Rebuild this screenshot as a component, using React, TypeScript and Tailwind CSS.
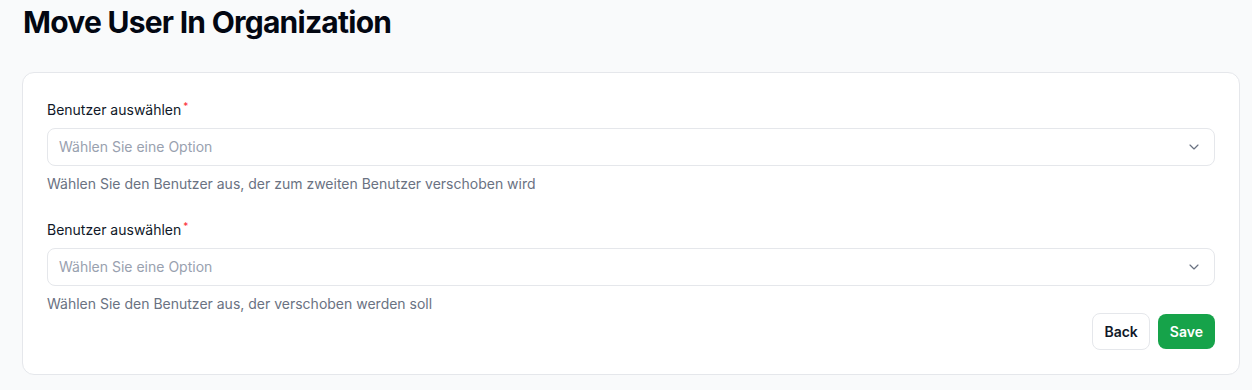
import { ChevronDown } from 'lucide-react';

type FieldProps = {
  label: string;
  placeholder: string;
  hint: string;
};

const SelectField = ({ label, placeholder, hint }: FieldProps) => {
  return (
    <div className="flex flex-col">
      <label className="text-sm leading-5 text-gray-900">
        {label}
        <sup className="ml-0.5 text-[10px] text-red-500">*</sup>
      </label>

      <button
        type="button"
        className="mt-2 flex h-[38px] w-full items-center justify-between rounded-lg border border-gray-200 bg-white pl-[11px] pr-3 text-left"
      >
        <span className="text-sm text-gray-400">{placeholder}</span>
        <ChevronDown className="h-4 w-4 text-gray-500" strokeWidth={1.75} />
      </button>

      <p className="mt-2 text-sm leading-5 text-gray-500">{hint}</p>
    </div>
  );
};

export default function App() {
  return (
    <div className="min-h-[390px] bg-gray-50 pl-[22px] pr-[12px] pt-1 font-['Inter',sans-serif]">
      <h1 className="pl-px text-3xl leading-9 font-bold tracking-tight text-gray-950">
        Move User In Organization
      </h1>

      <div className="mt-8 rounded-xl border border-gray-200 bg-white px-6 pt-[27px] pb-6">
        <div className="flex flex-col gap-[26px]">
          <SelectField
            label="Benutzer auswählen"
            placeholder="Wählen Sie eine Option"
            hint="Wählen Sie den Benutzer aus, der zum zweiten Benutzer verschoben wird"
          />
          <SelectField
            label="Benutzer auswählen"
            placeholder="Wählen Sie eine Option"
            hint="Wählen Sie den Benutzer aus, der verschoben werden soll"
          />
        </div>

        <div className="-mt-px flex items-center justify-end gap-2">
          <button
            type="button"
            className="h-[37px] rounded-lg border border-gray-200 bg-white px-[11px] text-sm font-semibold text-gray-900"
          >
            Back
          </button>
          <button
            type="button"
            className="h-[35px] rounded-lg bg-[#16a34a] px-3 text-sm font-semibold text-white"
          >
            Save
          </button>
        </div>
      </div>
    </div>
  );
}
